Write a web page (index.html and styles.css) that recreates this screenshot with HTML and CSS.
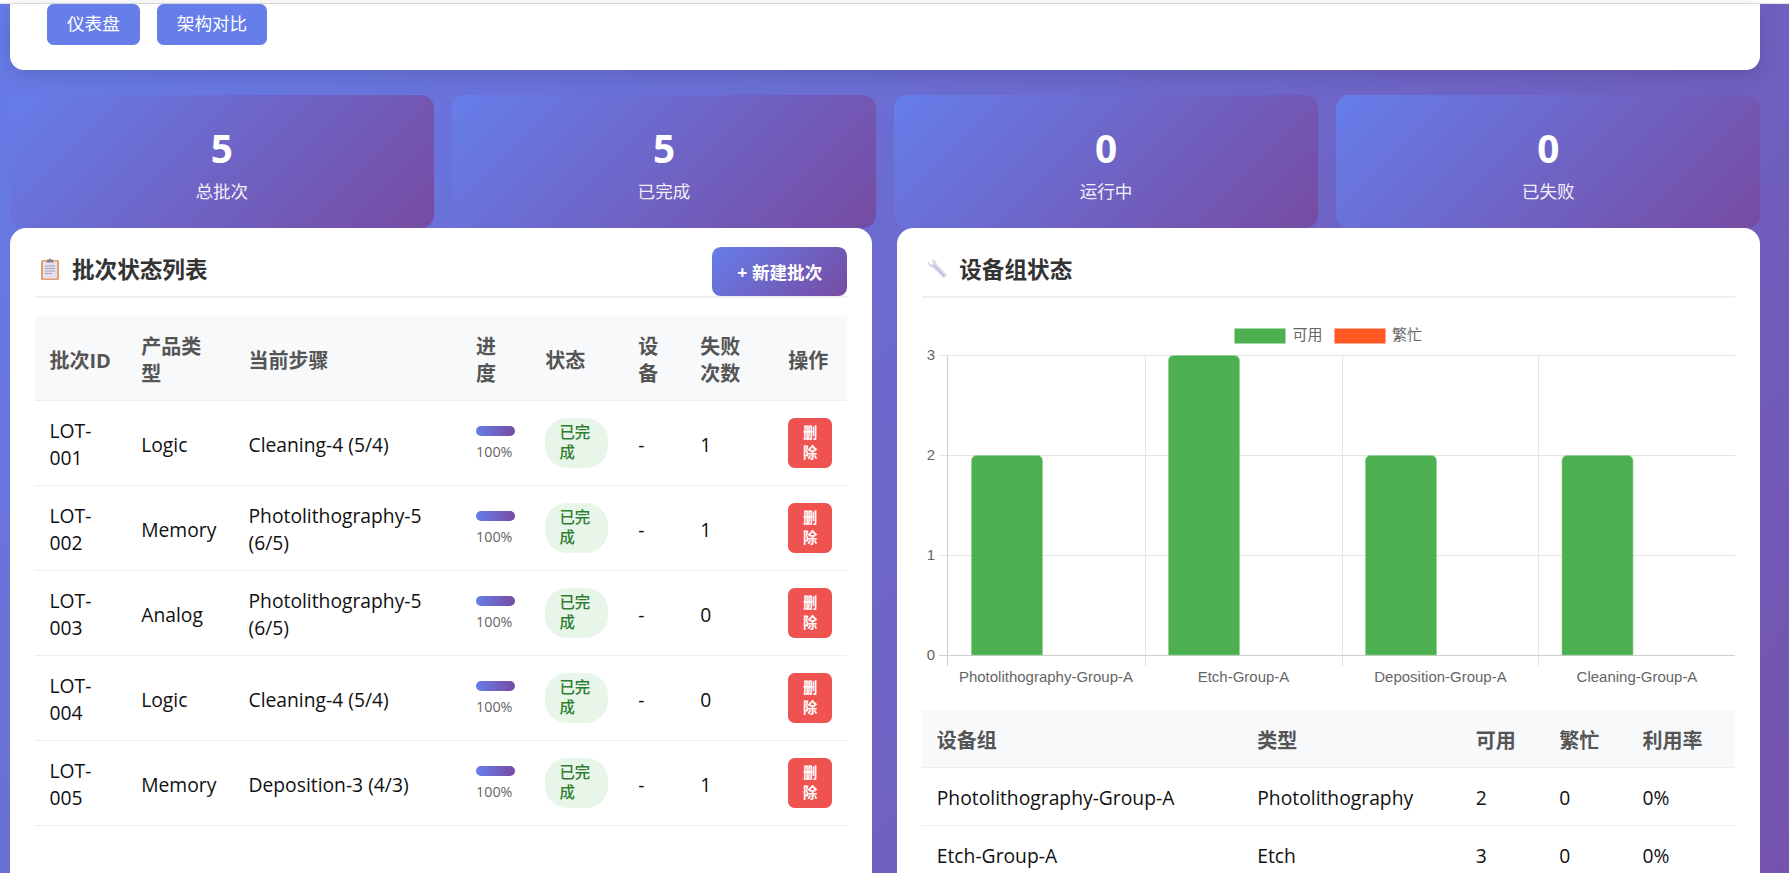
FILE: index.html
```html
<!DOCTYPE html>
<html lang="zh-CN">
<head>
<meta charset="utf-8">
<title>批次状态</title>
<link rel="stylesheet" href="styles.css">
</head>
<body>
<div class="topline"></div>
<main class="page">
  <nav class="nav-card">
    <a class="nav-btn">仪表盘</a>
    <a class="nav-btn">架构对比</a>
  </nav>
  <section class="stats">
    <div class="stat"><div class="stat-num">5</div><div class="stat-label">总批次</div></div>
    <div class="stat"><div class="stat-num">5</div><div class="stat-label">已完成</div></div>
    <div class="stat"><div class="stat-num">0</div><div class="stat-label">运行中</div></div>
    <div class="stat"><div class="stat-num">0</div><div class="stat-label">已失败</div></div>
  </section>
  <section class="panels">
    <article class="panel">
      <header class="panel-head">
        <h2 class="panel-title">
          <svg class="emoji" viewBox="0 0 20 22"><rect x="1" y="2" width="18" height="20" rx="1.5" fill="#e3a06e"/><rect x="3" y="3.5" width="14" height="17" fill="#e6e0ee"/><path d="M7 3V1.5h2L10 0l1 1.5h2V3l1 1.5H6z" fill="#86828c"/><path d="M5 8h10M5 10.5h10M5 13h10M5 15.5h7" stroke="#a8a2b0" stroke-width="1"/></svg>
          批次状态列表
        </h2>
        <button class="new-btn">+ 新建批次</button>
      </header>
      <table class="table lots">
        <colgroup><col class="l1"><col class="l2"><col class="l3"><col class="l4"><col class="l5"><col class="l6"><col class="l7"><col class="l8"></colgroup>
        <thead><tr><th>批次ID</th><th>产品类型</th><th>当前步骤</th><th class="th-wrap">进度</th><th>状态</th><th>设备</th><th>失败次数</th><th>操作</th></tr></thead>
        <tbody>
          <tr><td>LOT-001</td><td>Logic</td><td>Cleaning-4 (5/4)</td><td><div class="bar"></div><div class="pct">100%</div></td><td class="ctl"><span class="badge">已完成</span></td><td>-</td><td>1</td><td class="ctl"><button class="del">删除</button></td></tr>
          <tr><td>LOT-002</td><td>Memory</td><td>Photolithography-5 (6/5)</td><td><div class="bar"></div><div class="pct">100%</div></td><td class="ctl"><span class="badge">已完成</span></td><td>-</td><td>1</td><td class="ctl"><button class="del">删除</button></td></tr>
          <tr><td>LOT-003</td><td>Analog</td><td>Photolithography-5 (6/5)</td><td><div class="bar"></div><div class="pct">100%</div></td><td class="ctl"><span class="badge">已完成</span></td><td>-</td><td>0</td><td class="ctl"><button class="del">删除</button></td></tr>
          <tr><td>LOT-004</td><td>Logic</td><td>Cleaning-4 (5/4)</td><td><div class="bar"></div><div class="pct">100%</div></td><td class="ctl"><span class="badge">已完成</span></td><td>-</td><td>0</td><td class="ctl"><button class="del">删除</button></td></tr>
          <tr><td>LOT-005</td><td>Memory</td><td>Deposition-3 (4/3)</td><td><div class="bar"></div><div class="pct">100%</div></td><td class="ctl"><span class="badge">已完成</span></td><td>-</td><td>1</td><td class="ctl"><button class="del">删除</button></td></tr>
        </tbody>
      </table>
    </article>
    <article class="panel">
      <header class="panel-head">
        <h2 class="panel-title">
          <svg class="emoji" viewBox="0 0 22 22"><path d="M1 2.5 4.5 6 7 4.5 5 1c3-.8 5.8 1.4 5.6 4.6l10 10.6c.9 1 .9 2.6 0 3.6-1 1-2.6 1-3.6 0L7 9.6C4 10 .6 6.5 1 2.5z" fill="#dcd8ea"/><path d="M7 6.5l12 12.5" stroke="#bdb6d6" stroke-width="1.4"/></svg>
          设备组状态
        </h2>
      </header>
      <svg class="chart" viewBox="0 0 813 374">
        <g class="grid">
          <path d="M25.5 39.5H813M17 139.5H813M17 239.5H813"/>
          <path d="M17 39.5H25M17 339.5H25"/>
          <path d="M223.5 39V350M420.5 39V350M616.5 39V350"/>
        </g>
        <path class="axis" d="M25.5 39V350M17 339.5H813"/>
        <rect class="swatch ok" x="312.5" y="12.5" width="51" height="15"/>
        <rect class="swatch busy" x="412.5" y="12.5" width="51" height="15"/>
        <text class="lbl" x="370.5" y="24">可用</text>
        <text class="lbl" x="470" y="24">繁忙</text>
        <path class="bar-fill" d="M49.5 339V144.5a5 5 0 0 1 5-5h61a5 5 0 0 1 5 5V339z"/>
        <path class="bar-fill" d="M246.5 339V44.5a5 5 0 0 1 5-5h61a5 5 0 0 1 5 5V339z"/>
        <path class="bar-fill" d="M443.5 339V144.5a5 5 0 0 1 5-5h61a5 5 0 0 1 5 5V339z"/>
        <path class="bar-fill" d="M640 339V144.5a5 5 0 0 1 5-5h61a5 5 0 0 1 5 5V339z"/>
        <text class="lbl end" x="13" y="44">3</text>
        <text class="lbl end" x="13" y="144">2</text>
        <text class="lbl end" x="13" y="244">1</text>
        <text class="lbl end" x="13" y="344">0</text>
        <text class="lbl mid" x="124" y="366">Photolithography-Group-A</text>
        <text class="lbl mid" x="321.5" y="366">Etch-Group-A</text>
        <text class="lbl mid" x="518.5" y="366">Deposition-Group-A</text>
        <text class="lbl mid" x="715" y="366">Cleaning-Group-A</text>
      </svg>
      <table class="table groups">
        <colgroup><col class="g1"><col class="g2"><col class="g3"><col class="g4"><col class="g5"></colgroup>
        <thead><tr><th>设备组</th><th>类型</th><th>可用</th><th>繁忙</th><th>利用率</th></tr></thead>
        <tbody>
          <tr><td>Photolithography-Group-A</td><td>Photolithography</td><td>2</td><td>0</td><td>0%</td></tr>
          <tr><td>Etch-Group-A</td><td>Etch</td><td>3</td><td>0</td><td>0%</td></tr>
        </tbody>
      </table>
    </article>
  </section>
</main>
</body>
</html>
```
FILE: styles.css
```css
* { box-sizing: border-box; }
html, body { margin: 0; height: 100%; overflow: hidden; }
body {
  font-family: "Open Sans", "Noto Sans CJK SC", sans-serif;
  font-size: 17.6px;
  line-height: 27px;
  color: #111;
  background: linear-gradient(135deg, #667eea 0%, #764ba2 100%) no-repeat 0 -120px / 1789px 1500px #764ba2;
}
.topline { height: 4px; background: #fff; border-bottom: 1px solid #e2e2e2; }
.page { padding: 0 29px 0 10px; }

.nav-card {
  display: flex;
  gap: 17px;
  height: 66px;
  padding: 0 37px;
  background: #fff;
  border-radius: 0 0 14px 14px;
  box-shadow: 0 4px 22px rgba(0,0,0,.14);
}
.nav-btn {
  height: 41px;
  padding: 6px 20px;
  color: #fff;
  font-size: 17.6px;
  background: #667eea;
  border-radius: 6.6px;
}

.stats {
  display: grid;
  grid-template-columns: repeat(4, 1fr);
  gap: 18.5px;
  margin-top: 25px;
}
.stat {
  height: 133px;
  padding-top: 29px;
  text-align: center;
  color: #fff;
  background: linear-gradient(135deg, #667eea 0%, #764ba2 100%);
  border-radius: 13.2px;
}
.stat-num { font-size: 38.7px; line-height: 48px; font-weight: 700; }
.stat-label { margin-top: 7px; line-height: 24px; opacity: .9; }

.panels {
  display: grid;
  grid-template-columns: 1fr 1fr;
  gap: 25px;
}
.panel {
  padding: 19px 25px 25px;
  background: #fff;
  border-radius: 16px;
}
.panel-head {
  display: flex;
  justify-content: space-between;
  align-items: center;
  height: 51px;
  margin-bottom: 18px;
  border-bottom: 2px solid #f0f0f0;
}
.panel-title {
  display: flex;
  align-items: center;
  gap: 12px;
  margin: -5px 0 0;
  padding-left: 5px;
  font-size: 22.6px;
  font-weight: 700;
  color: #333;
}
.emoji { width: 20px; height: 22px; }
.new-btn {
  width: 135px;
  height: 49px;
  border: 0;
  color: #fff;
  font: 700 17.6px "Open Sans", "Noto Sans CJK SC", sans-serif;
  background: linear-gradient(135deg, #667eea 0%, #764ba2 100%);
  border-radius: 8.8px;
}

.table { width: 100%; border-collapse: collapse; table-layout: fixed; font-size: 19.3px; }
.table th, .table td {
  padding: 16px 14.5px 14px;
  text-align: left;
  border-bottom: 1px solid #eee;
}
.table .ctl { padding-top: 15px; padding-bottom: 15px; }
.table th {
  padding-top: 17px;
  padding-bottom: 13px;
  font-size: 20px;
  font-weight: 700;
  color: #555;
  background: #f8f9fa;
}
.table .th-wrap { padding-right: 20px; }

.l1 { width: 91.7px; } .l2 { width: 107.3px; } .l3 { width: 227.6px; } .l4 { width: 69.1px; }
.l5 { width: 93px; } .l6 { width: 62px; } .l7 { width: 88px; } .l8 { width: 73.6px; }
.g1 { width: 320.5px; } .g2 { width: 218.5px; } .g3 { width: 83.5px; } .g4 { width: 83.2px; } .g5 { width: 107.3px; }

.bar {
  height: 10px;
  width: 39px;
  border-radius: 5px;
  background: linear-gradient(90deg, #667eea, #764ba2);
}
.pct { margin-top: 5px; font-size: 14.3px; line-height: 22px; color: #666; }
.badge {
  display: inline-block;
  vertical-align: middle;
  max-width: 63px;
  padding: 5px 14.3px;
  font-size: 15.4px;
  line-height: 20px;
  font-weight: 500;
  color: #2e7d32;
  background: #e8f5e9;
  border-radius: 22px;
}
.del {
  display: block;
  width: 44px;
  height: 50px;
  padding: 0 8.8px;
  border: 0;
  color: #fff;
  font: 700 14.3px/20px "Open Sans", "Noto Sans CJK SC", sans-serif;
  background: #ef5350;
  border-radius: 6.6px;
}

.chart { display: block; width: 100%; height: 374px; margin-bottom: 20px; }
.grid path { fill: none; stroke: #e5e5e5; stroke-width: 1.1; }
.axis { fill: none; stroke: #cfcfcf; stroke-width: 1.1; }
.bar-fill { fill: #4caf50; stroke: #8fcf92; stroke-width: .6; }
.swatch { stroke-width: 1; }
.swatch.ok { fill: #4caf50; stroke: #a5d7a7; }
.swatch.busy { fill: #ff5722; stroke: #ffab91; }
.lbl { font: 15px "Liberation Sans", "Noto Sans CJK SC", sans-serif; fill: #666; }
.lbl.end { text-anchor: end; }
.lbl.mid { text-anchor: middle; }
```
